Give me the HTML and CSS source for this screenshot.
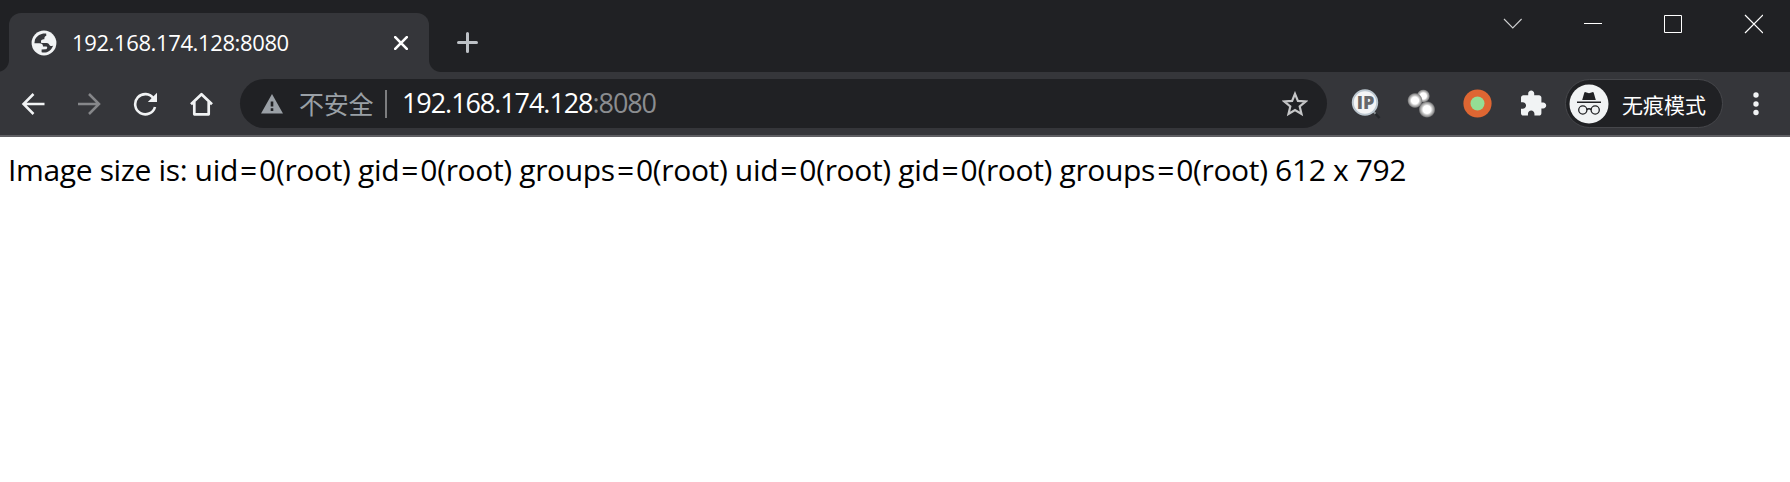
FILE: index.html
```html
<!DOCTYPE html>
<html lang="zh-CN">
<head>
<meta charset="utf-8">
<title>192.168.174.128:8080</title>
<link rel="stylesheet" href="styles.css">
</head>
<body>
<header class="tabstrip">
  <div class="tab">
    <svg class="favicon" viewBox="0 0 26 26"><circle cx="13" cy="13" r="12.4" fill="#f1f3f4"/><path d="M15.2 3.6C10.500 3 6.200 5.300 4 9.500L3.400 13.300H8.200C10.800 13.300 12 14.300 12 16.400H15C16.800 16.400 16.600 19 14.600 19.300L10.600 19.500V22.300C16 23.400 20.300 20.500 22.200 15.400C20.800 16.500 18.900 16.200 18.300 14.800C17.600 13 16.200 12.900 14.200 12.900H10.300C9.400 10.300 10.800 9.300 13.400 9.300C13.200 7.200 13.700 6.100 15.300 5.700Z" fill="#35363a"/></svg>
    <span class="tab-title">192.168.174.128:8080</span>
    <svg class="tab-close" viewBox="0 0 14 14"><path d="M1.200 1.200 12.800 12.800M12.800 1.200 1.200 12.800" stroke="#fff" stroke-width="2.600" stroke-linecap="round"/></svg>
  </div>
  <svg class="new-tab" viewBox="0 0 22 22"><path d="M11.500 1.500V19.500M2.500 10.500H20.500" stroke="#bdc1c6" stroke-width="3" stroke-linecap="round"/></svg>
  <div class="window-controls">
    <svg viewBox="0 0 20 20"><path d="M1 5 9.800 14 18.600 5" fill="none" stroke="#cfd0d1" stroke-width="1.100"/></svg>
    <svg viewBox="0 0 20 20"><path d="M1 9.500H19" stroke="#fff"/></svg>
    <svg viewBox="0 0 20 20"><path d="M1.500 1.500H18.500V18.500H1.500Z" fill="none" stroke="#fff"/></svg>
    <svg viewBox="0 0 20 20"><path d="M2 1 20 19M20 1 2 19" stroke="#fff" stroke-width="1.200"/></svg>
  </div>
</header>
<nav class="toolbar">
  <div class="nav-buttons">
    <svg viewBox="0 0 24 24"><path d="M23.500 12H2.500M12.500 2 2.500 12 12.500 22" fill="none" stroke="#f1f3f4" stroke-width="2.500"/></svg>
    <svg viewBox="0 0 24 24"><path d="M1 12H22M12 2 22 12 12 22" fill="none" stroke="#86878a" stroke-width="2.500"/></svg>
    <svg viewBox="0 0 24 24"><path d="M20.600 6.500A10.100 10.100 0 1 0 22 15" fill="none" stroke="#f1f3f4" stroke-width="2.600"/><path d="M24 .8V10H14.800Z" fill="#f1f3f4"/></svg>
    <svg viewBox="0 0 24 24"><path d="M2 12.300 12.500 2.200 23 12.300M5.300 10V22.300H19.700V10" fill="none" stroke="#f1f3f4" stroke-width="2.700" stroke-linejoin="round"/></svg>
  </div>
  <div class="omnibox">
    <svg class="warning" viewBox="0 0 22 20"><path d="M11 0 22 19.500H0Z" fill="#9aa0a6"/><path d="M11 7.500V12.500M11 14.300V16.900" stroke="#202124" stroke-width="2.600"/></svg>
    <span class="insecure">不安全</span>
    <span class="divider"></span>
    <span class="url">192.168.174.128<span class="port">:8080</span></span>
    <svg class="star" viewBox="0 0 26 26"><path d="M13 2.800 15.900 9.900 23.600 10.500 17.700 15.500 19.500 23 13 19 6.500 23 8.300 15.500 2.400 10.500 10.100 9.900Z" fill="none" stroke="#c5c6c7" stroke-width="2.200"/></svg>
  </div>
  <div class="extensions">
    <svg viewBox="0 0 30 30"><path d="M22 22 28.500 29" stroke="#24272a" stroke-width="2.500"/><path d="M21.500 21.500 24.500 24.700" stroke="#8a9095" stroke-width="2"/><circle cx="14" cy="13.500" r="12.200" fill="#f4f5f6" stroke="#bcc7cf" stroke-width="2"/><text class="ip-label" x="14.500" y="20" text-anchor="middle">IP</text></svg>
    <svg viewBox="0 0 30 30"><defs><radialGradient id="glow"><stop offset="0" stop-color="#fff"/><stop offset=".46" stop-color="#fff"/><stop offset=".62" stop-color="#c9c9c9"/><stop offset=".85" stop-color="#8a8a8a"/><stop offset="1" stop-color="#77787a" stop-opacity="0"/></radialGradient></defs><circle cx="16.300" cy="7" r="6.800" fill="url(#glow)"/><circle cx="8" cy="11.500" r="7.800" fill="url(#glow)"/><circle cx="20" cy="20.500" r="8.500" fill="url(#glow)"/></svg>
    <svg viewBox="0 0 30 30"><circle cx="14.500" cy="14.500" r="14.100" fill="#de6632"/><circle cx="14.500" cy="14.500" r="7" fill="#94dd94"/></svg>
    <svg viewBox="0 0 30 30"><g transform="translate(-.4 .2) scale(1.2)"><path d="M20.500 11H19V7c0-1.100-.9-2-2-2h-4V3.500C13 2.120 11.880 1 10.500 1S8 2.120 8 3.500V5H4c-1.100 0-1.990.9-1.990 2v3.800H3.500c1.490 0 2.700 1.210 2.700 2.700s-1.210 2.700-2.700 2.700H2V20c0 1.100.9 2 2 2h3.800v-1.500c0-1.490 1.210-2.700 2.700-2.700 1.490 0 2.700 1.210 2.700 2.700V22H17c1.100 0 2-.9 2-2v-4h1.500c1.380 0 2.500-1.120 2.500-2.500S21.880 11 20.500 11z" fill="#f1f3f4"/></g></svg>
  </div>
  <div class="profile">
    <svg class="avatar" viewBox="0 0 40 40"><circle cx="20" cy="20" r="19.500" fill="#f1f3f4"/><path d="M13.200 16 15.300 8.800Q15.600 7.800 16.700 8.200L20 9.200 23.300 8.200Q24.400 7.800 24.700 8.800L26.800 16Z" fill="#202124"/><path d="M8 18.200H32M17.700 25.500Q20 24 22.300 25.500" fill="none" stroke="#202124" stroke-width="1.500"/><circle cx="13.800" cy="26" r="4.100" fill="none" stroke="#202124" stroke-width="1.300"/><circle cx="26.200" cy="26" r="4.100" fill="none" stroke="#202124" stroke-width="1.300"/></svg>
    <span class="profile-name">无痕模式</span>
  </div>
  <svg class="menu" viewBox="0 0 6 24"><g fill="#f1f3f4"><circle cx="3" cy="3" r="2.700"/><circle cx="3" cy="12" r="2.700"/><circle cx="3" cy="20.500" r="2.700"/></g></svg>
</nav>
<main class="page">Image size is: uid<span class="eq">=</span>0(root) gid<span class="eq">=</span>0(root) groups<span class="eq">=</span>0(root) uid<span class="eq">=</span>0(root) gid<span class="eq">=</span>0(root) groups<span class="eq">=</span>0(root) 612 x 792</main>
</body>
</html>
```
FILE: styles.css
```css
* { box-sizing: border-box; }
body {
  margin: 0;
  height: 482px;
  overflow: hidden;
  background: #fff;
  font-family: "Open Sans", "Noto Sans CJK SC", sans-serif;
}
svg { display: block; flex: none; }
.tabstrip {
  display: flex;
  height: 72px;
  padding: 13px 27px 0 9px;
  background: #202124;
}
.tab {
  position: relative;
  display: flex;
  align-items: center;
  width: 420px;
  height: 59px;
  padding: 0 21px 0 22px;
  border-radius: 12px 12px 0 0;
  background: #35363a;
}
.tab::before, .tab::after {
  content: "";
  position: absolute;
  bottom: 0;
  width: 12px;
  height: 12px;
}
.tab::before { left: -12px; background: radial-gradient(circle at 0 0, transparent 11.500px, #35363a 12.500px); }
.tab::after { right: -12px; background: radial-gradient(circle at 100% 0, transparent 11.500px, #35363a 12.500px); }
.favicon { width: 26px; height: 26px; }
.tab-title {
  margin-left: 15px;
  padding-bottom: 2px;
  color: #fff;
  font-size: 22px;
  line-height: 30px;
  letter-spacing: -.38px;
  white-space: nowrap;
}
.tab-close { width: 14px; height: 14px; margin-left: auto; }
.new-tab { width: 22px; height: 22px; margin: 19px 0 0 27px; }
.window-controls { display: flex; gap: 60px; margin: 1px 0 0 auto; }
.window-controls svg { width: 20px; height: 20px; }
.toolbar {
  display: flex;
  align-items: center;
  height: 65px;
  padding: 0 31px 0 21px;
  border-bottom: 2px solid #5f5f63;
  background: #35363a;
}
.nav-buttons { display: flex; gap: 32px; width: 219px; }
.nav-buttons svg { width: 24px; height: 24px; }
.omnibox {
  display: flex;
  align-items: center;
  width: 1087px;
  height: 49px;
  padding: 0 19px 0 21px;
  border-radius: 25px;
  background: #202124;
}
.warning { width: 22px; height: 20px; }
.insecure {
  width: 76px;
  margin-left: 16px;
  padding-bottom: 2px;
  color: #9aa0a6;
  font: 25px/36px "Noto Sans CJK SC", sans-serif;
  letter-spacing: -.3px;
  white-space: nowrap;
}
.divider { width: 2px; height: 28px; margin-left: 10px; background: #7c7d7f; }
.url {
  margin-left: 15px;
  padding-bottom: 2px;
  color: #fff;
  font-size: 27px;
  line-height: 36px;
  letter-spacing: -1.070px;
  white-space: nowrap;
}
.port { color: #8b8d90; }
.star { width: 26px; height: 26px; margin-left: auto; }
.extensions { display: flex; gap: 26px; margin-left: 24px; }
.extensions svg { width: 30px; height: 30px; }
.ip-label { font: 900 18px "Open Sans", sans-serif; fill: #66686a; }
.profile {
  display: flex;
  align-items: center;
  width: 158px;
  height: 49px;
  margin-left: 16px;
  padding-left: 3px;
  border: 1px solid #46474b;
  border-radius: 25px;
  background: #202124;
}
.avatar { width: 40px; height: 40px; }
.profile-name {
  margin-left: 13px;
  color: #fff;
  font: 21px/32px "Noto Sans CJK SC", sans-serif;
  white-space: nowrap;
}
.menu { width: 6px; height: 24px; margin-left: auto; }
.page {
  padding: 12px 8px;
  color: #000;
  font-size: 30px;
  line-height: 42px;
  letter-spacing: -.35px;
  white-space: nowrap;
}
.eq { margin: 0 2.200px; }
```
